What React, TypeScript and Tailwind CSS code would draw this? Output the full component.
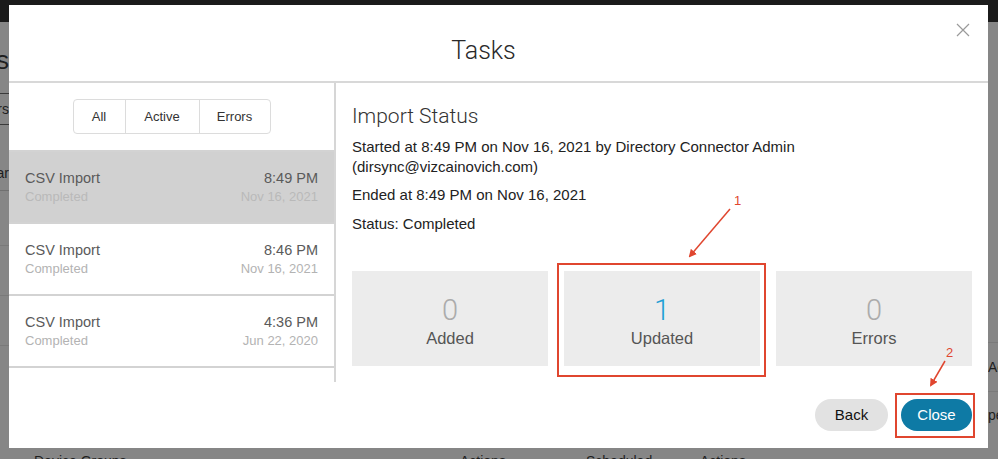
const tasks = [
  { name: 'CSV Import', status: 'Completed', time: '8:49 PM', date: 'Nov 16, 2021', active: true },
  { name: 'CSV Import', status: 'Completed', time: '8:46 PM', date: 'Nov 16, 2021', active: false },
  { name: 'CSV Import', status: 'Completed', time: '4:36 PM', date: 'Jun 22, 2020', active: false },
];

const stats = [
  { value: 0, label: 'Added', highlight: false },
  { value: 1, label: 'Updated', highlight: true },
  { value: 0, label: 'Errors', highlight: false },
];

// the page behind the dimmed overlay, only slivers of it show
function Backdrop() {
  return (
    <div className="absolute inset-0 flex flex-col text-[#1e1e1e]">
      <div className="h-[22px] shrink-0 bg-[#1b1b1b]" />
      <div className="flex flex-1">
        <div className="w-[9px] overflow-hidden flex flex-col items-end">
          <div className="h-[71px] pt-[23px] whitespace-nowrap text-[26px] leading-[30px]">Tasks</div>
          <div className="h-[32px] w-full border-y border-[#3a3a3a] flex items-center justify-end whitespace-nowrap text-[14px]">Users</div>
          <div className="h-[39px] w-full" />
          <div className="h-[18px] whitespace-nowrap text-[14px] leading-[18px]">Clear</div>
          <div className="h-[55px] w-full border-t border-[#707070] mt-[8px]" />
          <div className="h-[50px] w-full border-t border-[#7a7a7a]" />
          <div className="h-[50px] w-full border-t border-[#7a7a7a]" />
          <div className="h-[50px] w-full border-t border-[#7a7a7a]" />
        </div>
        <div className="flex-1" />
        <div className="w-[10px] overflow-hidden flex flex-col pt-[320px] text-[14px] leading-[20px]">
          <div className="h-[49px] border-t border-[#7a7a7a] pt-[14px] whitespace-nowrap">Actions</div>
          <div className="h-[46px] border-t border-[#7a7a7a] pt-[13px] whitespace-nowrap">pending</div>
        </div>
      </div>
      <div className="h-[11px] shrink-0 overflow-hidden flex text-[14px] leading-[18px] whitespace-nowrap pt-[4px]">
        <span className="ml-[34px] w-[426px]">Device Groups</span>
        <span className="w-[126px]">Actions</span>
        <span className="w-[114px]">Scheduled</span>
        <span>Actions</span>
      </div>
    </div>
  );
}

function CloseIcon() {
  return (
    <svg width="14" height="14" viewBox="0 0 14 14" className="block">
      <path d="M1 1 L13 13 M13 1 L1 13" stroke="#9a9a9a" strokeWidth="1.2" fill="none" />
    </svg>
  );
}

function TaskList() {
  return (
    <div className="w-[327px] h-[299px] border-r-2 border-[#d6d6d6] flex flex-col">
      <div className="flex justify-center py-4">
        <div className="flex h-[35px] rounded-[4px] border border-[#dcdcdc] text-[13px] text-[#333]">
          <button className="w-[52px] border-r border-[#dcdcdc]">All</button>
          <button className="w-[74px] border-r border-[#dcdcdc]">Active</button>
          <button className="w-[70px]">Errors</button>
        </div>
      </div>
      <div className="border-t-2 border-[#d3d3d3]">
        {tasks.map((t, i) => (
          <div
            key={i}
            className={`h-[72px] flex items-center justify-between pl-4 pr-4 border-b-2 border-[#d3d3d3] ${t.active ? 'bg-[#d1d1d1]' : 'bg-white'}`}
          >
            <div>
              <div className="text-[14.5px] leading-[20px] text-[#5a5a5a]">{t.name}</div>
              <div className={`text-[13px] leading-[18px] ${t.active ? 'text-[#b9b9b9]' : 'text-[#b3b3b3]'}`}>{t.status}</div>
            </div>
            <div className="text-right">
              <div className="text-[14.5px] leading-[20px] text-[#5a5a5a]">{t.time}</div>
              <div className={`text-[13px] leading-[18px] ${t.active ? 'text-[#b9b9b9]' : 'text-[#b3b3b3]'}`}>{t.date}</div>
            </div>
          </div>
        ))}
      </div>
    </div>
  );
}

function ImportStatus() {
  return (
    <div className="flex-1 px-4 pt-[20px]">
      <h2 className="text-[21px] leading-[26px] font-light text-[#333] font-['Roboto',sans-serif]">Import Status</h2>
      <div className="text-[15px] leading-[20px] text-[#222]">
        <p className="mt-[8px]">
          Started at 8:49 PM on Nov 16, 2021 by Directory Connector Admin
          <br />
          (dirsync@vizcainovich.com)
        </p>
        <p className="mt-[8px]">Ended at 8:49 PM on Nov 16, 2021</p>
        <p className="mt-[9px]">Status: Completed</p>
      </div>
      <div className="grid grid-cols-3 gap-4 mt-[37px]">
        {stats.map((s) => (
          <div key={s.label} className="h-[95px] bg-[#ececec] flex flex-col items-center justify-center pt-[5px]">
            <div
              className={`text-[29px] leading-[32px] font-light font-['Roboto',sans-serif] ${s.highlight ? 'text-[#1f9fd5]' : 'text-[#ababab]'}`}
            >
              {s.value}
            </div>
            <div className="text-[16.5px] leading-[22px] mt-[1px] text-[#555]">{s.label}</div>
          </div>
        ))}
      </div>
      <div className="flex justify-end gap-[13px] mt-[33px]">
        <button className="w-[73px] h-[32px] rounded-full bg-[#e2e2e2] text-[15px] text-[#111]">Back</button>
        <button className="w-[71px] h-[32px] rounded-full bg-[#0e7aa5] text-[15px] text-white">Close</button>
      </div>
    </div>
  );
}

// red markup drawn on top of the screenshot
function Annotations() {
  return (
    <>
      <div className="absolute left-[557px] top-[263px] w-[209px] h-[114px] border-2 border-[#e0462f]" />
      <div className="absolute left-[895px] top-[393px] w-[80px] h-[45px] border-2 border-[#e0462f]" />
      <div className="absolute left-[734px] top-[191px] text-[13px] text-[#e0462f]">1</div>
      <div className="absolute left-[946px] top-[343px] text-[13px] text-[#e0462f]">2</div>
      <svg className="absolute inset-0 pointer-events-none" width="998" height="459">
        <defs>
          <marker id="head" markerWidth="8" markerHeight="8" refX="6" refY="4" orient="auto" markerUnits="userSpaceOnUse">
            <path d="M0 0 L8 4 L0 8 Z" fill="#e0462f" />
          </marker>
        </defs>
        <line x1="730" y1="209" x2="690" y2="256" stroke="#e0462f" strokeWidth="1.5" markerEnd="url(#head)" />
        <line x1="945" y1="361" x2="931" y2="385" stroke="#e0462f" strokeWidth="1.5" markerEnd="url(#head)" />
      </svg>
    </>
  );
}

export default function App() {
  return (
    <div className="relative w-[998px] h-[459px] overflow-hidden bg-[#868686] font-['Liberation_Sans',Arial,sans-serif]">
      <Backdrop />
      <div className="absolute left-[9px] top-[5px] w-[979px] h-[443px] bg-white flex flex-col">
        <div className="relative h-[78px] flex items-center justify-center pr-[30px] pt-[16px] border-b-2 border-[#d8d8d8]">
          <h1 className="text-[25px] font-light text-[#2a2a2a] font-['Roboto',sans-serif]">Tasks</h1>
          <button className="absolute right-[18px] top-[18px]">
            <CloseIcon />
          </button>
        </div>
        <div className="flex flex-1 items-start">
          <TaskList />
          <ImportStatus />
        </div>
      </div>
      <Annotations />
    </div>
  );
}
